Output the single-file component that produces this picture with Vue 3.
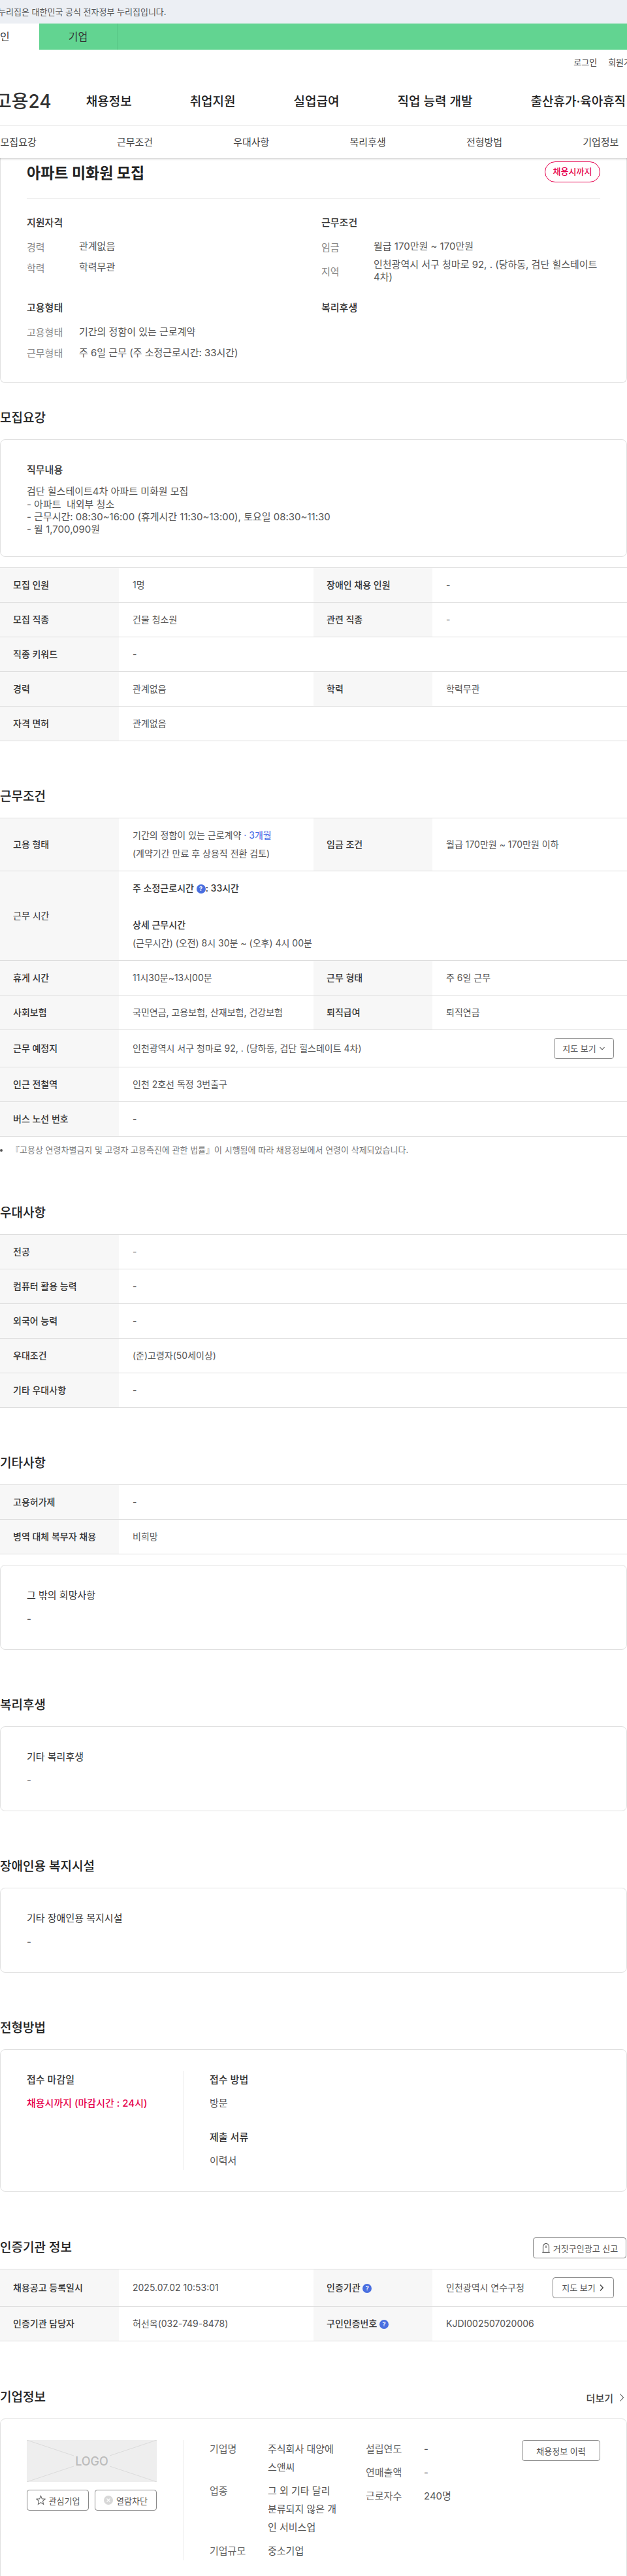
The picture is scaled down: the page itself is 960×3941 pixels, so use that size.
<template>
  <div class="page">
    <div class="gov-bar"><span>누리집은 대한민국 공식 전자정부 누리집입니다.</span></div>
    <div class="user-tabs">
      <a class="user-tab on">개인</a>
      <a class="user-tab">기업</a>
    </div>
    <div class="util"><a>로그인</a><a>회원가입</a></div>
    <nav class="gnb">
      <span class="logo">고용24</span>
      <a v-for="m in gnb" :key="m">{{ m }}</a>
    </nav>
    <div class="subnav">
      <a v-for="s in subnav" :key="s">{{ s }}</a>
    </div>

    <section class="card summary">
      <div class="title-row">
        <h1>아파트 미화원 모집</h1>
        <span class="pill">채용시까지</span>
      </div>
      <div class="summary-grid">
        <div>
          <h3>지원자격</h3>
          <dl>
            <div><dt>경력</dt><dd>관계없음</dd></div>
            <div><dt>학력</dt><dd>학력무관</dd></div>
          </dl>
        </div>
        <div>
          <h3>근무조건</h3>
          <dl>
            <div><dt>임금</dt><dd>월급 170만원 ~ 170만원</dd></div>
            <div><dt>지역</dt><dd>인천광역시 서구 청마로 92, . (당하동, 검단 힐스테이트 4차)</dd></div>
          </dl>
        </div>
        <div>
          <h3>고용형태</h3>
          <dl>
            <div><dt>고용형태</dt><dd>기간의 정함이 있는 근로계약</dd></div>
            <div><dt>근무형태</dt><dd>주 6일 근무 (주 소정근로시간: 33시간)</dd></div>
          </dl>
        </div>
        <div>
          <h3>복리후생</h3>
        </div>
      </div>
    </section>

    <h2 class="head first">모집요강</h2>
    <section class="card">
      <h4>직무내용</h4>
      <div class="pre">
        <p v-for="l in duties" :key="l">{{ l }}</p>
      </div>
    </section>
    <table class="info gap-top">
      <colgroup><col class="c1" /><col class="c2" /><col class="c1" /><col /></colgroup>
      <tbody>
        <tr><th>모집 인원</th><td>1명</td><th>장애인 채용 인원</th><td>-</td></tr>
        <tr><th>모집 직종</th><td>건물 청소원</td><th>관련 직종</th><td>-</td></tr>
        <tr><th>직종 키워드</th><td colspan="3">-</td></tr>
        <tr><th>경력</th><td>관계없음</td><th>학력</th><td>학력무관</td></tr>
        <tr><th>자격 면허</th><td colspan="3">관계없음</td></tr>
      </tbody>
    </table>

    <h2 class="head">근무조건</h2>
    <table class="info">
      <colgroup><col class="c1" /><col class="c2" /><col class="c1" /><col /></colgroup>
      <tbody>
        <tr>
          <th>고용 형태</th>
          <td>기간의 정함이 있는 근로계약 <span class="blue">· 3개월</span><br />(계약기간 만료 후 상용직 전환 검토)</td>
          <th>임금 조건</th>
          <td>월급 170만원 ~ 170만원 이하</td>
        </tr>
        <tr>
          <th class="light">근무 시간</th>
          <td colspan="3">
            <b>주 소정근로시간 <i class="help">?</i>: 33시간</b><br /><br />
            <b>상세 근무시간</b><br />
            (근무시간) (오전) 8시 30분 ~ (오후) 4시 00분
          </td>
        </tr>
        <tr><th>휴게 시간</th><td>11시30분~13시00분</td><th>근무 형태</th><td>주 6일 근무</td></tr>
        <tr><th>사회보험</th><td>국민연금, 고용보험, 산재보험, 건강보험</td><th>퇴직급여</th><td>퇴직연금</td></tr>
        <tr>
          <th>근무 예정지</th>
          <td colspan="3">
            <div class="with-btn">
              <span>인천광역시 서구 청마로 92, . (당하동, 검단 힐스테이트 4차)</span>
              <button class="btn map">지도 보기
                <svg width="10" height="10" viewBox="0 0 10 10"><path d="M1.5 3.2 5 6.8l3.5-3.6" fill="none" stroke="#555" stroke-width="1.1" /></svg>
              </button>
            </div>
          </td>
        </tr>
        <tr><th>인근 전철역</th><td colspan="3">인천 2호선 독정 3번출구</td></tr>
        <tr><th>버스 노선 번호</th><td colspan="3">-</td></tr>
      </tbody>
    </table>
    <p class="note">『고용상 연령차별금지 및 고령자 고용촉진에 관한 법률』이 시행됨에 따라 채용정보에서 연령이 삭제되었습니다.</p>

    <h2 class="head after-note">우대사항</h2>
    <table class="info">
      <colgroup><col class="c1" /><col class="c2" /><col class="c1" /><col /></colgroup>
      <tbody>
        <tr v-for="r in prefs" :key="r[0]"><th>{{ r[0] }}</th><td colspan="3">{{ r[1] }}</td></tr>
      </tbody>
    </table>

    <h2 class="head">기타사항</h2>
    <table class="info">
      <colgroup><col class="c1" /><col class="c2" /><col class="c1" /><col /></colgroup>
      <tbody>
        <tr><th>고용허가제</th><td colspan="3">-</td></tr>
        <tr><th>병역 대체 복무자 채용</th><td colspan="3">비희망</td></tr>
      </tbody>
    </table>
    <section class="card gap-top">
      <h4 class="thin">그 밖의 희망사항</h4>
      <p class="line">-</p>
    </section>

    <h2 class="head">복리후생</h2>
    <section class="card">
      <h4 class="thin">기타 복리후생</h4>
      <p class="line">-</p>
    </section>

    <h2 class="head">장애인용 복지시설</h2>
    <section class="card">
      <h4 class="thin">기타 장애인용 복지시설</h4>
      <p class="line">-</p>
    </section>

    <h2 class="head">전형방법</h2>
    <section class="card method">
      <div class="deadline">
        <h4>접수 마감일</h4>
        <p class="line red">채용시까지 (마감시간 : 24시)</p>
      </div>
      <div class="divided">
        <h4>접수 방법</h4>
        <p class="line">방문</p>
        <h4 class="next">제출 서류</h4>
        <p class="line">이력서</p>
      </div>
    </section>

    <div class="head-row">
      <h2>인증기관 정보</h2>
      <button class="btn report">
        <svg width="14" height="18" viewBox="0 0 14 18" fill="none" stroke="#444" stroke-width="1.1">
          <path d="M2.5 15.5V7a4.5 4.5 0 0 1 9 0v8.5z" />
          <path d="M1 16h12M7 5.5V9" />
        </svg>
        거짓구인광고 신고
      </button>
    </div>
    <table class="info">
      <colgroup><col class="c1" /><col class="c2" /><col class="c1" /><col /></colgroup>
      <tbody>
        <tr>
          <th>채용공고 등록일시</th>
          <td>2025.07.02 10:53:01</td>
          <th>인증기관 <i class="help">?</i></th>
          <td>
            <div class="with-btn">
              <span>인천광역시 연수구청</span>
              <button class="btn map wide">지도 보기
                <svg width="10" height="12" viewBox="0 0 10 12"><path d="M3 1.5 7.2 6 3 10.5" fill="none" stroke="#444" stroke-width="1.4" /></svg>
              </button>
            </div>
          </td>
        </tr>
        <tr>
          <th>인증기관 담당자</th>
          <td>허선옥(032-749-8478)</td>
          <th>구인인증번호 <i class="help">?</i></th>
          <td>KJDI002507020006</td>
        </tr>
      </tbody>
    </table>

    <div class="head-row company-head">
      <h2>기업정보</h2>
      <a class="more">더보기
        <svg width="8" height="14" viewBox="0 0 8 14"><path d="M1.5 1.5 6.5 7l-5 5.5" fill="none" stroke="#555" stroke-width="1.1" /></svg>
      </a>
    </div>
    <section class="card company">
      <div class="company-left">
        <div class="logo-box">
          <svg viewBox="0 0 199 64" preserveAspectRatio="none">
            <path d="M0 0 72 24M0 64 72 40M199 0 127 24M199 64 127 40" stroke="#dcdcdc" fill="none" />
          </svg>
          <span>LOGO</span>
        </div>
        <div class="logo-btns">
          <button class="btn small">
            <svg width="15" height="16" viewBox="0 0 15 16"><path d="m7.5 1.5 1.9 4.4 4.6.4-3.5 3.1 1.1 4.8-4.1-2.6-4.1 2.6 1.1-4.8L1 6.3l4.6-.4z" fill="none" stroke="#666" stroke-width="1.1" /></svg>
            관심기업
          </button>
          <button class="btn small">
            <svg width="14" height="14" viewBox="0 0 14 14"><circle cx="7" cy="7" r="7" fill="#d8d8d8" /><path d="m4.5 4.5 5 5m0-5-5 5" stroke="#fff" stroke-width="1.1" /></svg>
            열람차단
          </button>
        </div>
      </div>
      <div class="divided company-info">
        <dl class="co-list">
          <div v-for="c in companyA" :key="c[0]"><dt>{{ c[0] }}</dt><dd>{{ c[1] }}</dd></div>
        </dl>
        <dl class="co-list">
          <div v-for="c in companyB" :key="c[0]"><dt>{{ c[0] }}</dt><dd>{{ c[1] }}</dd></div>
        </dl>
        <button class="btn history">채용정보 이력</button>
      </div>
    </section>
  </div>
</template>

<script setup>
const gnb = ['채용정보', '취업지원', '실업급여', '직업 능력 개발', '출산휴가·육아휴직']
const subnav = ['모집요강', '근무조건', '우대사항', '복리후생', '전형방법', '기업정보']
const duties = [
  '검단 힐스테이트4차 아파트 미화원 모집',
  '- 아파트  내외부 청소',
  '- 근무시간: 08:30~16:00 (휴게시간 11:30~13:00), 토요일 08:30~11:30',
  '- 월 1,700,090원'
]
const prefs = [
  ['전공', '-'],
  ['컴퓨터 활용 능력', '-'],
  ['외국어 능력', '-'],
  ['우대조건', '(준)고령자(50세이상)'],
  ['기타 우대사항', '-']
]
const companyA = [
  ['기업명', '주식회사 대양에 스앤씨'],
  ['업종', '그 외 기타 달리 분류되지 않은 개인 서비스업'],
  ['기업규모', '중소기업']
]
const companyB = [
  ['설립연도', '-'],
  ['연매출액', '-'],
  ['근로자수', '240명']
]
</script>

<style>
html, body {
  margin: 0;
  background: #fff;
}
</style>

<style scoped>
.page {
  width: 960px;
  height: 3941px;
  overflow: hidden;
  font-family: "Inter", "Noto Sans CJK KR", "Noto Sans", sans-serif;
  font-size: 15px;
  color: #555;
  background: #fff;
}
.gov-bar {
  height: 36px;
  line-height: 36px;
  background: #eceff4;
  font-size: 13px;
  color: #555;
  white-space: nowrap;
}
.gov-bar span {
  margin-left: -3px;
}
.user-tabs {
  display: flex;
  height: 40px;
  background: #62d491;
  padding-left: 60px;
  position: relative;
}
.user-tab {
  width: 119px;
  line-height: 40px;
  text-align: center;
  font-size: 16px;
  color: #333;
  border-right: 1px solid #58c586;
}
.user-tab.on {
  position: absolute;
  left: -60px;
  width: 120px;
  background: #fff;
  border: 0;
}
.util {
  display: flex;
  justify-content: flex-end;
  gap: 17px;
  height: 38px;
  line-height: 38px;
  margin-right: -19px;
  font-size: 13px;
  color: #444;
}
.gnb {
  display: flex;
  align-items: center;
  gap: 89px;
  height: 78px;
  margin-left: -8px;
  border-bottom: 1px solid #eee;
  white-space: nowrap;
  font-size: 19px;
  font-weight: 500;
  color: #222;
}
.logo {
  font-size: 28px;
  font-weight: 500;
  margin-right: -36px;
  color: #333;
}
.subnav {
  position: relative;
  z-index: 2;
  display: flex;
  height: 49px;
  margin-left: -61px;
  width: 1070px;
  background: #fff;
  box-shadow: 0 1px 3px rgba(0, 0, 0, 0.22);
}
.subnav a {
  flex: 1;
  line-height: 49px;
  text-align: center;
  font-size: 15px;
  color: #444;
}
.card {
  box-sizing: border-box;
  border: 1px solid #e0e0e0;
  border-radius: 8px;
  padding: 32px 40px;
  background: #fff;
}
.summary {
  padding: 5px 40px 32px;
  border-top: 0;
  border-radius: 0 0 8px 8px;
}
.title-row {
  display: flex;
  justify-content: space-between;
  align-items: center;
  height: 32px;
  padding-bottom: 24px;
  border-bottom: 1px solid #eee;
}
h1 {
  margin: 0;
  font-size: 23px;
  font-weight: 700;
  color: #222;
}
.pill {
  box-sizing: border-box;
  width: 85px;
  height: 32px;
  line-height: 29px;
  text-align: center;
  border: 1px solid #e6004d;
  border-radius: 16px;
  font-size: 13px;
  font-weight: 500;
  color: #e6004d;
}
.summary-grid {
  display: grid;
  grid-template-columns: 427px 427px;
  column-gap: 24px;
  row-gap: 24px;
  margin-top: 23px;
}
h3 {
  margin: 0;
  font-size: 15px;
  line-height: 28px;
  font-weight: 500;
  color: #333;
}
dl {
  margin: 8px 0 0;
}
dl > div {
  display: flex;
  align-items: center;
  min-height: 28px;
  margin-bottom: 4px;
}
dl > div:last-child {
  margin-bottom: 0;
}
dt {
  flex: 0 0 80px;
  color: #888;
}
dd {
  margin: 0;
  line-height: 19.2px;
  color: #555;
}
.head,
.head-row h2 {
  margin: 0;
  height: 32px;
  line-height: 32px;
  font-size: 19px;
  font-weight: 500;
  color: #222;
}
.head {
  margin: 69px 0 16px;
}
.head.first {
  margin-top: 38px;
}
.head.after-note {
  margin-top: 73px;
}
.head-row {
  display: flex;
  justify-content: space-between;
  align-items: center;
  height: 32px;
  margin: 70px 0 16px;
}
h4 {
  margin: 0;
  font-size: 15px;
  line-height: 28px;
  font-weight: 500;
  color: #333;
}
h4.thin {
  font-weight: 400;
}
h4.next {
  margin-top: 24px;
}
.pre {
  margin: 9px 0 0;
  line-height: 19.2px;
}
.pre p {
  margin: 0;
  white-space: pre-wrap;
}
.line {
  margin: 8px 0 0;
  line-height: 28px;
}
.red {
  color: #e6004d;
  font-weight: 500;
}
.gap-top {
  margin-top: 16px;
}
.info {
  width: 960px;
  table-layout: fixed;
  border-collapse: separate;
  border-spacing: 0;
  border-top: 1px solid #ddd;
  font-size: 14px;
  line-height: 28px;
}
.c1 {
  width: 182px;
}
.c2 {
  width: 298px;
}
.info th,
.info td {
  padding: 12px 20px;
  border-bottom: 1px solid #ddd;
  text-align: left;
  vertical-align: middle;
}
.info th {
  background: #f7f7f7;
  font-weight: 500;
  color: #333;
}
.info th.light {
  font-weight: 400;
}
.info td {
  padding-left: 21px;
  color: #555;
}
.info td b {
  font-weight: 500;
  color: #333;
}
.blue {
  color: #3c64e6;
}
.help {
  display: inline-block;
  width: 14px;
  height: 14px;
  line-height: 14px;
  border-radius: 50%;
  background: #4a6fe0;
  color: #fff;
  font-size: 9px;
  font-style: normal;
  font-weight: 700;
  text-align: center;
  vertical-align: 1px;
}
.with-btn {
  display: flex;
  justify-content: space-between;
  align-items: center;
}
.btn {
  display: inline-flex;
  align-items: center;
  justify-content: center;
  gap: 4px;
  box-sizing: border-box;
  height: 32px;
  padding: 0;
  border: 1px solid #888;
  border-radius: 4px;
  background: #fff;
  font: inherit;
  font-size: 13px;
  color: #555;
}
.map {
  width: 92px;
}
.map.wide {
  width: 94px;
}
.report {
  width: 143px;
  margin-right: 1px;
  gap: 4px;
}
.note {
  position: relative;
  margin: 12px 0 0;
  padding-left: 17px;
  line-height: 16px;
  font-size: 13px;
  color: #777;
}
.note::before {
  content: "";
  position: absolute;
  left: 0;
  top: 7px;
  width: 4px;
  height: 4px;
  border-radius: 50%;
  background: #555;
}
.method {
  display: flex;
}
.deadline {
  width: 239px;
}
.divided {
  border-left: 1px solid #eee;
  padding-left: 40px;
}
.company-head {
  margin-top: 70px;
}
.more {
  display: inline-flex;
  align-items: center;
  gap: 9px;
  margin-right: 4px;
  font-size: 15px;
  font-weight: 500;
  color: #444;
}
.company {
  display: flex;
}
.company-left {
  width: 239px;
  flex: none;
}
.logo-box {
  position: relative;
  width: 199px;
  height: 64px;
  background: #eee;
  display: flex;
  align-items: center;
  justify-content: center;
}
.logo-box svg {
  position: absolute;
  inset: 0;
  width: 100%;
  height: 100%;
}
.logo-box span {
  position: relative;
  font-size: 18px;
  font-weight: 500;
  color: #bbb;
}
.logo-btns {
  display: flex;
  justify-content: space-between;
  width: 199px;
  margin-top: 12px;
}
.small {
  width: 95px;
  gap: 5px;
}
.company-info {
  flex: 1;
  display: flex;
}
.co-list {
  margin: 0;
  width: 239px;
  flex: none;
}
.co-list > div {
  align-items: flex-start;
  margin-bottom: 8px;
}
.co-list dt {
  flex: 0 0 89px;
  line-height: 28px;
  color: #666;
}
.co-list dd {
  width: 112px;
  line-height: 28px;
  word-break: break-all;
}
.history {
  flex: none;
  width: 120px;
  margin-left: auto;
}
</style>
